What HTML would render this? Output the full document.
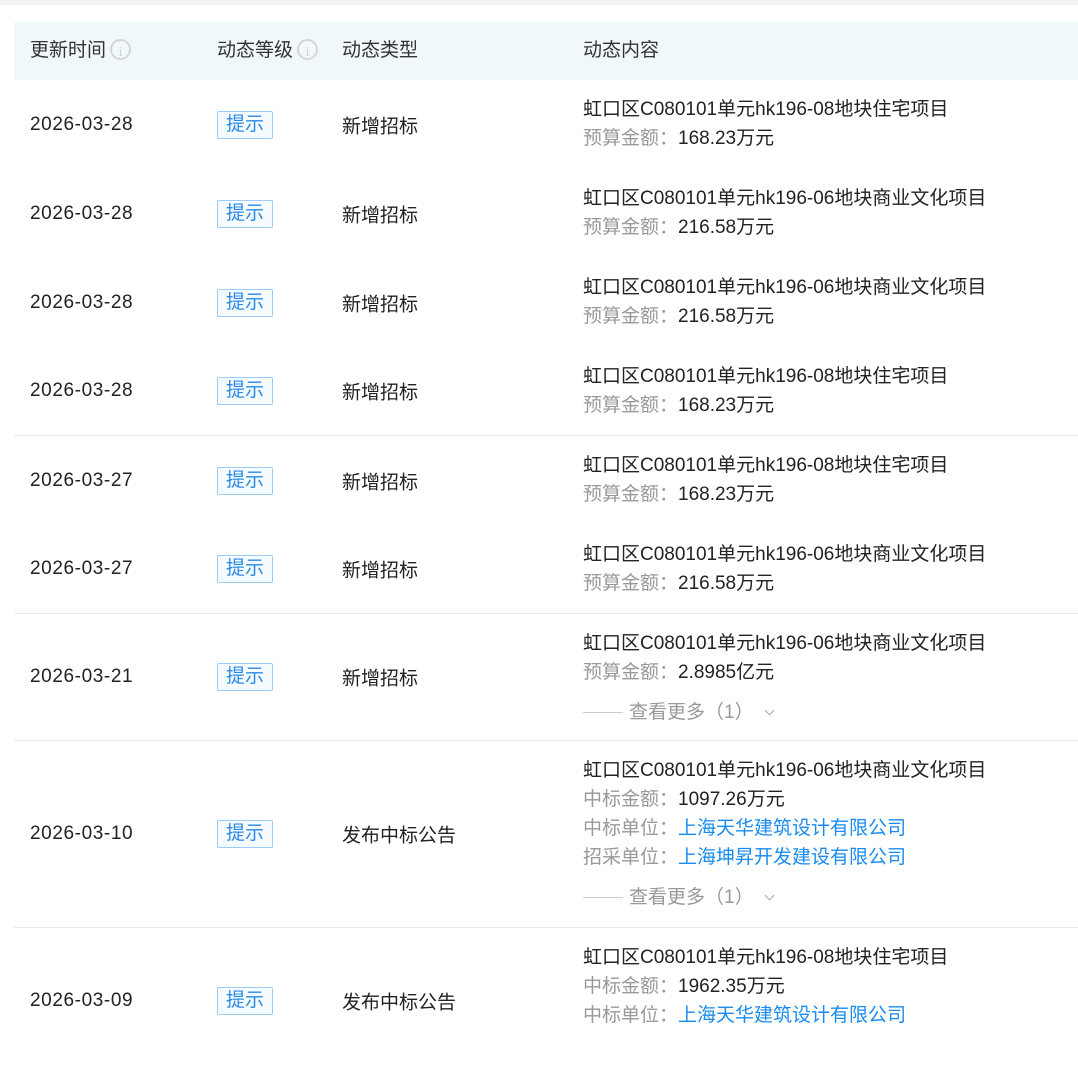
<!DOCTYPE html>
<html><head><meta charset="utf-8"><style>
*{margin:0;padding:0;box-sizing:border-box}
body{width:1078px;height:1026px;overflow:hidden;background:#fff;font-family:"Liberation Sans","Noto Sans CJK SC",sans-serif;font-size:19px;color:#222}
.top{position:absolute;left:0;top:0;width:1078px;height:5px;background:#f3f4f6}
.wrap{position:absolute;left:14px;top:22px;width:1080px}
.hd{height:58px;background:#f1f8fc;display:flex;align-items:center;position:relative;color:#333}
.hd span{line-height:24px}
.c1{position:absolute;left:16px}.c2{position:absolute;left:203px}.c3{position:absolute;left:328px}.c4{position:absolute;left:569px}
.row .c1{letter-spacing:0.6px}
.i{display:inline-block;width:21px;height:21px;border:2px solid #d5d5d5;border-radius:50%;color:#cfcfcf;font-size:14px;line-height:17px;text-align:center;vertical-align:middle;margin-left:4px;margin-top:-3px;font-family:"Liberation Serif",serif}
.row{position:relative;display:flex;align-items:center}
.row.b{border-bottom:1px solid #e8e8e8}
.row .c1,.row .c2,.row .c3{top:50%;transform:translateY(-50%)}
.tag{display:inline-block;border:1px solid #9ccbf5;border-radius:2px;color:#2a8ae8;padding:0 8px;height:28px;line-height:26px;background:#f6fbff;letter-spacing:0}
.c4.ct{position:absolute;top:15px;line-height:29px}
.g{color:#999}.bl{color:#1a8cf0}
.more{margin-top:11px;color:#999}
.more:before{content:"";display:inline-block;width:40px;height:1px;background:#ccc;vertical-align:middle;margin-right:6px}
.chev{display:inline-block;width:7px;height:7px;border-right:1.5px solid #aaa;border-bottom:1.5px solid #aaa;transform:rotate(45deg);margin-left:12px;vertical-align:4px}
</style></head><body>
<div class="top"></div>
<div class="wrap">
<div class="hd"><span class="c1">更新时间<span class="i">i</span></span><span class="c2">动态等级<span class="i">i</span></span><span class="c3">动态类型</span><span class="c4">动态内容</span></div>

<div class="row" style="height:89px"><span class="c1">2026-03-28</span><span class="c2"><span class="tag">提示</span></span><span class="c3">新增招标</span><div class="c4 ct">虹口区C080101单元hk196-08地块住宅项目<br><span class="g">预算金额：</span>168.23万元</div></div>
<div class="row" style="height:89px"><span class="c1">2026-03-28</span><span class="c2"><span class="tag">提示</span></span><span class="c3">新增招标</span><div class="c4 ct">虹口区C080101单元hk196-06地块商业文化项目<br><span class="g">预算金额：</span>216.58万元</div></div>
<div class="row" style="height:89px"><span class="c1">2026-03-28</span><span class="c2"><span class="tag">提示</span></span><span class="c3">新增招标</span><div class="c4 ct">虹口区C080101单元hk196-06地块商业文化项目<br><span class="g">预算金额：</span>216.58万元</div></div>
<div class="row b" style="height:89px"><span class="c1">2026-03-28</span><span class="c2"><span class="tag">提示</span></span><span class="c3">新增招标</span><div class="c4 ct">虹口区C080101单元hk196-08地块住宅项目<br><span class="g">预算金额：</span>168.23万元</div></div>
<div class="row" style="height:89px"><span class="c1">2026-03-27</span><span class="c2"><span class="tag">提示</span></span><span class="c3">新增招标</span><div class="c4 ct">虹口区C080101单元hk196-08地块住宅项目<br><span class="g">预算金额：</span>168.23万元</div></div>
<div class="row b" style="height:89px"><span class="c1">2026-03-27</span><span class="c2"><span class="tag">提示</span></span><span class="c3">新增招标</span><div class="c4 ct">虹口区C080101单元hk196-06地块商业文化项目<br><span class="g">预算金额：</span>216.58万元</div></div>
<div class="row b" style="height:127px"><span class="c1">2026-03-21</span><span class="c2"><span class="tag">提示</span></span><span class="c3">新增招标</span><div class="c4 ct">虹口区C080101单元hk196-06地块商业文化项目<br><span class="g">预算金额：</span>2.8985亿元<div class="more">查看更多（1）<span class="chev"></span></div></div></div>
<div class="row b" style="height:187px"><span class="c1">2026-03-10</span><span class="c2"><span class="tag">提示</span></span><span class="c3">发布中标公告</span><div class="c4 ct">虹口区C080101单元hk196-06地块商业文化项目<br><span class="g">中标金额：</span>1097.26万元<br><span class="g">中标单位：</span><span class="bl">上海天华建筑设计有限公司</span><br><span class="g">招采单位：</span><span class="bl">上海坤昇开发建设有限公司</span><div class="more">查看更多（1）<span class="chev"></span></div></div></div>
<div class="row" style="height:146px"><span class="c1">2026-03-09</span><span class="c2"><span class="tag">提示</span></span><span class="c3">发布中标公告</span><div class="c4 ct">虹口区C080101单元hk196-08地块住宅项目<br><span class="g">中标金额：</span>1962.35万元<br><span class="g">中标单位：</span><span class="bl">上海天华建筑设计有限公司</span></div></div>
</div>
</body></html>
